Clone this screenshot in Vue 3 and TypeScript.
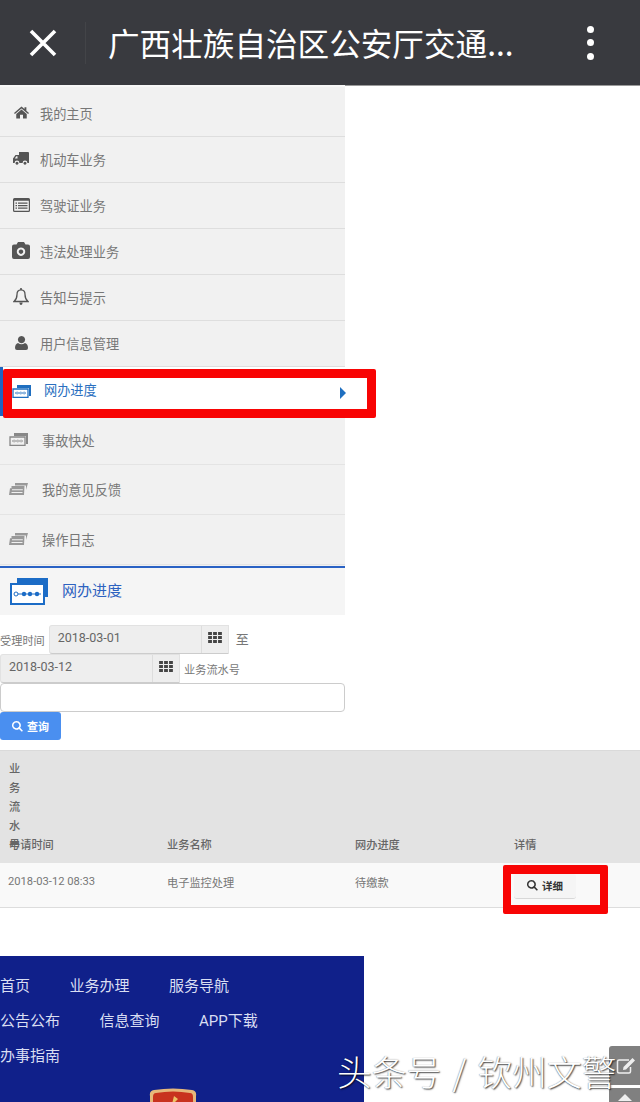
<script setup lang="ts">
interface Part { d: string; kind?: 'fill' | 'line' | 'soft' }
interface Item { label: string; vb: string; cls: string; parts: Part[] }

const card: Part[] = [
  { d: 'M5 0H19V11H17V3H5Z', kind: 'fill' },
  { d: 'M1 4H16V12.5H1Z', kind: 'line' },
  { d: 'M3 8.5H14V7.5H3Z M4.5 6.8h1.4v2.4h-1.4Z M8 6.8h1.4v2.4H8Z M11.5 6.8h1.4v2.4h-1.4Z', kind: 'fill' }
]
const feedback: Part[] = [
  { d: 'M6 1H19L17 8V3.6H6Z', kind: 'soft' },
  { d: 'M2.5 4H15.5L15 13H0L1 6.2H2.5Z M3 7.3H13.8V8.3H3Z M2.5 10H13.5V11H2.5Z', kind: 'soft' }
]

const topItems: Item[] = [
  { label: '我的主页', vb: '0 0 20 16', cls: 'i-home', parts: [{ d: 'M10 0L14 3.4V1H16.5V5.5L20 8.5L18.8 10L10 2.6L1.2 10L0 8.5Z M10 4L17 10V16H12V11H8V16H3V10Z', kind: 'fill' }] },
  { label: '机动车业务', vb: '0 0 16 14', cls: 'i-truck', parts: [{ d: 'M6 0H15Q16 0 16 1V11H14.4A2.4 2.4 0 0 0 9.6 11H6.4A2.4 2.4 0 0 0 1.6 11H0V6.5L2.5 3H6Z M1.8 6.5H4.5V4.3H3.3Z M4 9.7a1.5 1.5 0 1 1-.01 0Z M12 9.7a1.5 1.5 0 1 1-.01 0Z', kind: 'fill' }] },
  { label: '驾驶证业务', vb: '0 0 17 14', cls: 'i-list', parts: [{ d: 'M1.5 0H15.5Q17 0 17 1.5V12.5Q17 14 15.5 14H1.5Q0 14 0 12.5V1.5Q0 0 1.5 0Z M1.2 2.8V12.2Q1.2 12.8 1.8 12.8H15.2Q15.8 12.8 15.8 12.2V2.8Z M2.5 4.5H4V5.7H2.5Z M5 4.5H14.5V5.7H5Z M2.5 7H4V8.2H2.5Z M5 7H14.5V8.2H5Z M2.5 9.5H4V10.7H2.5Z M5 9.5H14.5V10.7H5Z', kind: 'fill' }] },
  { label: '违法处理业务', vb: '0 0 18 17', cls: 'i-camera', parts: [{ d: 'M6 0H12L13.5 2.5H16Q18 2.5 18 4.5V15Q18 17 16 17H2Q0 17 0 15V4.5Q0 2.5 2 2.5H4.5Z M9 5.5a4.2 4.2 0 1 0 .01 0Z M9 7.5a2.2 2.2 0 1 1-.01 0Z', kind: 'fill' }] },
  { label: '告知与提示', vb: '0 0 16 17', cls: 'i-bell', parts: [{ d: 'M8 1.8C5 1.8 4 4 4 6.5C4 10 2.8 12 1 13.5H15C13.2 12 12 10 12 6.5C12 4 11 1.8 8 1.8Z', kind: 'line' }, { d: 'M6.3 14.5H9.7Q9.3 17 8 17Q6.7 17 6.3 14.5Z M7.2 0H8.8V2H7.2Z', kind: 'fill' }] },
  { label: '用户信息管理', vb: '0 0 13 14', cls: 'i-user', parts: [{ d: 'M6.5 0a3.6 3.6 0 1 0 .01 0Z M3 7Q6.5 9.6 10 7Q13 8 13 12Q13 14 11 14H2Q0 14 0 12Q0 8 3 7Z', kind: 'fill' }] }
]
const lowerItems: Item[] = [
  { label: '事故快处', vb: '0 0 19 13', cls: 'i-card', parts: card },
  { label: '我的意见反馈', vb: '0 0 19 13', cls: 'i-feed', parts: feedback },
  { label: '操作日志', vb: '0 0 19 13', cls: 'i-feed', parts: feedback }
]
const footerRows: string[][] = [
  ['首页', '业务办理', '服务导航'],
  ['公告公布', '信息查询', 'APP下载'],
  ['办事指南']
]
const headChars: string[] = ['业', '务', '流', '水']
const searchPath = 'M5 0a5 5 0 1 0 3 9l3.2 3.2 1.2-1.2L9.2 7.8A5 5 0 0 0 5 0Z M5 1.7a3.3 3.3 0 1 1-.01 0Z'
const gridPath = 'M0 0h3.6v2.8H0Z M4.7 0h3.6v2.8H4.7Z M9.4 0H13v2.8H9.4Z M0 3.8h3.6v2.8H0Z M4.7 3.8h3.6v2.8H4.7Z M9.4 3.8H13v2.8H9.4Z M0 7.6h3.6v2.8H0Z M4.7 7.6h3.6v2.8H4.7Z M9.4 7.6H13v2.8H9.4Z'
</script>

<template>
  <div class="page">
    <header class="topbar">
      <svg class="close" viewBox="0 0 28 28"><path d="M2 2L26 26M26 2L2 26" /></svg>
      <span class="divider"></span>
      <h1 class="title">广西壮族自治区公安厅交通...</h1>
      <div class="dots"><i></i><i></i><i></i></div>
    </header>

    <nav class="menu">
      <a v-for="item in topItems" :key="item.label" class="row">
        <span class="icon-slot">
          <svg :class="item.cls" :viewBox="item.vb">
            <path v-for="p in item.parts" :key="p.d" :d="p.d" :class="p.kind" fill-rule="evenodd" />
          </svg>
        </span>
        <span>{{ item.label }}</span>
      </a>
      <a class="row active">
        <span class="icon-slot">
          <svg class="i-card" viewBox="0 0 19 13">
            <path v-for="p in card" :key="p.d" :d="p.d" :class="p.kind" fill-rule="evenodd" />
          </svg>
        </span>
        <span>网办进度</span>
        <i class="caret"></i>
      </a>
      <a v-for="(item, i) in lowerItems" :key="item.label" class="row lower" :class="{ 'lower-first': i === 0 }">
        <span class="icon-slot">
          <svg :class="item.cls" :viewBox="item.vb">
            <path v-for="p in item.parts" :key="p.d" :d="p.d" :class="p.kind" fill-rule="evenodd" />
          </svg>
        </span>
        <span>{{ item.label }}</span>
      </a>
    </nav>

    <div class="section-head">
      <svg class="big-card" viewBox="0 0 38 27">
        <path class="back" d="M7 0H38V19H35V5H7Z" />
        <path class="front" d="M1 6H34V26H1Z" />
        <path class="wire" d="M4 16H31" />
        <circle class="ring" cx="6" cy="16" r="2" />
        <circle class="dot" cx="14" cy="16" r="2.2" />
        <circle class="dot" cx="20" cy="16" r="2.2" />
        <circle class="dot" cx="27" cy="16" r="2.2" />
      </svg>
      <span>网办进度</span>
    </div>

    <form class="filter" @submit.prevent>
      <div class="line">
        <label class="lab">受理时间</label>
        <div class="date wide">
          <span class="date-val">2018-03-01</span>
          <span class="addon"><svg viewBox="0 0 13 10.4"><path :d="gridPath" /></svg></span>
        </div>
        <span class="to">至</span>
      </div>
      <div class="line">
        <div class="date">
          <span class="date-val">2018-03-12</span>
          <span class="addon"><svg viewBox="0 0 13 10.4"><path :d="gridPath" /></svg></span>
        </div>
        <label class="lab serial">业务流水号</label>
      </div>
      <div class="text-input"></div>
      <button class="search" type="button">
        <svg viewBox="0 0 12.5 12.5"><path :d="searchPath" fill-rule="evenodd" /></svg>
        查询
      </button>
    </form>

    <table class="grid">
      <colgroup>
        <col class="c1" /><col class="c2" /><col class="c3" /><col />
      </colgroup>
      <thead>
        <tr>
          <th>
            <span v-for="c in headChars" :key="c" class="stack">{{ c }}</span>
            <span class="apply"><b class="over">号</b>申请时间</span>
          </th>
          <th>业务名称</th>
          <th>网办进度</th>
          <th>详情</th>
        </tr>
      </thead>
      <tbody>
        <tr>
          <td>2018-03-12 08:33</td>
          <td>电子监控处理</td>
          <td>待缴款</td>
          <td class="detail-cell">
            <button class="detail" type="button">
              <svg viewBox="0 0 12.5 12.5"><path :d="searchPath" fill-rule="evenodd" /></svg>
              详细
            </button>
          </td>
        </tr>
      </tbody>
    </table>

    <footer class="foot">
      <div v-for="(r, i) in footerRows" :key="i" class="foot-row">
        <a v-for="t in r" :key="t">{{ t }}</a>
      </div>
      <svg class="emblem" viewBox="0 0 50 40">
        <path class="e-gold" d="M2 8Q1 3 6 2Q25 -1 44 2Q49 3 48 8V40H2Z" />
        <path class="e-red" d="M5 9Q5 5 8 5Q25 2 42 5Q45 5 45 9V40H5Z" />
        <path class="e-fig" d="M26 8L30 11L26 15L32 22H26L22 30L20 20L24 16Z" />
      </svg>
    </footer>

    <div class="mark mark-nav"></div>
    <div class="mark mark-detail"></div>

    <div class="floaters">
      <div class="fl edit">
        <svg viewBox="0 0 20 18"><path d="M13 3H3Q1.5 3 1.5 4.5V14.5Q1.5 16 3 16H13Q14.5 16 14.5 14.5V10" class="fl-line" /><path d="M16.5 1L19 3.5L10 12.5L7 13L7.5 10Z" class="fl-fill" /></svg>
      </div>
      <div class="fl up"><i></i></div>
    </div>
    <div class="watermark">头条号 / 钦州文警</div>
  </div>
</template>

<style scoped>
.page {
  position: relative;
  width: 640px;
  height: 1102px;
  overflow: hidden;
  background: #fff;
  font-family: Roboto, "Noto Sans CJK SC", sans-serif;
  color: #777;
}
.topbar {
  height: 85px;
  background: #393a3f;
  display: flex;
  align-items: center;
  border-bottom: 1px solid #9a9a9a;
  box-sizing: content-box;
}
.close {
  width: 28px;
  height: 28px;
  margin-left: 29px;
  flex: none;
}
.close path {
  stroke: #fff;
  stroke-width: 3.6;
  fill: none;
}
.divider {
  width: 1px;
  height: 42px;
  margin-left: 28px;
  background: #434448;
}
.title {
  margin: 0 0 0 22px;
  font-size: 31.6px;
  font-weight: 400;
  color: #fff;
  line-height: 1;
  white-space: nowrap;
  font-family: "Noto Sans CJK SC", sans-serif;
}
.dots {
  position: absolute;
  left: 586.5px;
  top: 25.5px;
  display: flex;
  flex-direction: column;
  gap: 6.5px;
}
.dots i {
  width: 7px;
  height: 7px;
  border-radius: 50%;
  background: #fff;
}
.menu {
  width: 345px;
  margin-top: -1px;
  background: #f1f1f1;
  padding: 4px 0 1px;
  border-top: 2px solid #f7f7f7;
}
.row {
  height: 46px;
  box-sizing: border-box;
  display: flex;
  align-items: center;
  padding-left: 10px;
  font-size: 13.2px;
  border-bottom: 1px solid #dedede;
  color: #777;
  position: relative;
}
.icon-slot {
  width: 30px;
  flex: none;
  display: flex;
  justify-content: center;
  padding-right: 8px;
  box-sizing: border-box;
  margin-top: -2px;
}
.row svg { display: block; color: #555; }
.fill { fill: currentColor; }
.line { fill: none; stroke: currentColor; stroke-width: 1.3; }
.soft { fill: #999; }
.i-home { width: 15px; height: 13px; }
.i-truck { width: 16px; height: 14px; }
.i-list { width: 17px; height: 14px; }
.i-camera { width: 18px; height: 17px; }
.i-bell { width: 16px; height: 17px; }
.i-user { width: 13px; height: 14px; }
.i-card { width: 19px; height: 13px; }
.i-feed { width: 19px; height: 13px; }
.active {
  height: 49px;
  padding-left: 14px;
  padding-bottom: 5px;
  background: #fff;
  color: #2a6fbf;
  border-left: 3px solid #1f63c0;
  border-bottom: 0;
}
.active .icon-slot {
  width: 27px;
  padding-right: 0;
  margin: 5px 9px 0 -9px;
}
.active svg { color: #1f6fc0; }
.caret {
  position: absolute;
  left: 337px;
  top: 20px;
  border-left: 6px solid #1f6fc0;
  border-top: 6px solid transparent;
  border-bottom: 6px solid transparent;
}
.lower {
  height: 50px;
  padding-left: 9px;
  color: #777;
  border-bottom-color: #e4e4e4;
}
.lower .icon-slot { width: 33px; padding-right: 14px; }
.lower svg { color: #888; }
.lower-first { height: 49px; }
.section-head {
  width: 345px;
  height: 49px;
  box-sizing: border-box;
  border-top: 2px solid #2a62c4;
  background: #f5f5f5;
  display: flex;
  align-items: center;
  padding: 0 0 4px 10px;
  gap: 14px;
  font-size: 15px;
  color: #2d62c0;
}
.big-card { width: 38px; height: 27px; margin-top: 4px; }
.back { fill: #1c6cc6; }
.front { fill: #fff; stroke: #1c6cc6; stroke-width: 2; }
.wire { stroke: #1c6cc6; stroke-width: 1; }
.dot { fill: #1c6cc6; }
.ring { fill: #fff; stroke: #1c6cc6; stroke-width: 1; }
.filter {
  width: 345px;
  padding-top: 10px;
}
.filter .line {
  display: flex;
  align-items: center;
  fill: initial;
  stroke: initial;
  stroke-width: initial;
  height: 29px;
}
.lab {
  font-size: 11.2px;
  color: #777;
  white-space: nowrap;
}
.date {
  width: 180px;
  height: 29px;
  box-sizing: border-box;
  display: flex;
  background: #eee;
  border: 1px solid #e2e2e2;
  border-bottom-color: #ccc;
  border-radius: 3px 0 0 3px;
  font-size: 12.5px;
  color: #666;
}
.date.wide { margin-left: 4px; }
.date-val {
  flex: 1;
  padding-left: 8px;
  line-height: 23px;
}
.addon {
  width: 27px;
  flex: none;
  border-left: 1px solid #ddd;
  display: flex;
  justify-content: center;
  padding-top: 6px;
  box-sizing: border-box;
}
.addon svg { width: 14px; height: 11px; fill: #444; }
.to { margin: 0 0 2px 7px; font-size: 13px; color: #777; }
.serial { margin-left: 4px; }
.text-input {
  width: 345px;
  height: 29px;
  box-sizing: border-box;
  border: 1px solid #ccc;
  border-radius: 4px;
  background: #fff;
}
.search {
  display: flex;
  align-items: center;
  gap: 4px;
  width: 61px;
  height: 28px;
  margin: 0;
  padding: 0 0 0 12px;
  border: 0;
  border-radius: 3px;
  background: #4a8ff0;
  color: #fff;
  font: bold 11px "Noto Sans CJK SC", sans-serif;
}
.search svg { width: 11px; height: 11px; fill: #fff; }
.grid {
  width: 640px;
  table-layout: fixed;
  border-collapse: collapse;
  margin-top: 10px;
  font-size: 11.2px;
}
.c1 { width: 157px; }
.c2 { width: 190px; }
.c3 { width: 159px; }
th {
  background: #e3e3e3;
  color: #666;
  font-weight: 500;
  text-align: left;
  vertical-align: bottom;
  padding: 8px 9px 7px;
  line-height: 19.1px;
  height: 112px;
  box-sizing: border-box;
  border-top: 1px solid #dadada;
}
th + th { padding-left: 10px; padding-right: 8px; }
th:nth-child(3) { padding-left: 8px; }
th:nth-child(4) { padding-left: 8px; }
.stack { display: block; }
.apply { display: block; position: relative; }
.over { position: absolute; left: 0; top: 0; font-weight: 500; }
td {
  height: 45px;
  box-sizing: border-box;
  padding: 0 0 6px 10px;
  background: #f9f9f9;
  border-bottom: 1px solid #ddd;
  color: #777;
}
td:first-child { padding-left: 8px; }
td:nth-child(3) { padding-left: 8px; }
.detail-cell { padding: 3px 0 0 8px; }
.detail {
  display: flex;
  align-items: center;
  justify-content: center;
  gap: 4px;
  width: 62px;
  height: 25px;
  margin: 0;
  padding: 0;
  background: #f5f5f5;
  border: 0;
  border-bottom: 1px solid #d8d8d8;
  border-radius: 3px;
  color: #333;
  font: bold 10.5px "Noto Sans CJK SC", sans-serif;
}
.detail svg { width: 11px; height: 11px; fill: #333; }
.foot {
  width: 364px;
  height: 200px;
  margin-top: 48px;
  padding-top: 11px;
  box-sizing: border-box;
  background: #10208a;
}
.foot-row {
  height: 35px;
  display: flex;
  gap: 39.5px;
  align-items: center;
  font-size: 15px;
  color: #d9def2;
}
.emblem {
  display: block;
  width: 50px;
  height: 40px;
  margin: 16px 0 0 148px;
}
.e-gold { fill: #e6b77a; }
.e-red { fill: #c8321e; }
.e-fig { fill: #edc263; }
.mark {
  position: absolute;
  box-sizing: border-box;
  border-style: solid;
  border-color: #f80404;
  border-radius: 2px;
}
.mark-nav {
  left: 3px;
  top: 369px;
  width: 373px;
  height: 49px;
  border-width: 9px;
}
.mark-detail {
  left: 503px;
  top: 865px;
  width: 105px;
  height: 49px;
  border-width: 9px 8px;
}
.floaters {
  position: absolute;
  left: 609px;
  top: 1046px;
  width: 31px;
}
.fl {
  background: #808080;
  border-radius: 3px 0 0 3px;
  display: flex;
  justify-content: center;
  align-items: center;
}
.edit { height: 39px; }
.edit svg { width: 20px; height: 18px; margin-left: 3px; }
.fl-line { fill: none; stroke: #eee; stroke-width: 1.5; }
.fl-fill { fill: #eee; }
.up { height: 30px; margin-top: 3px; align-items: flex-start; padding-top: 6px; box-sizing: border-box; }
.up i {
  border-left: 7px solid transparent;
  border-right: 7px solid transparent;
  border-bottom: 7px solid #eee;
}
.watermark {
  position: absolute;
  left: 337px;
  top: 1046px;
  font-size: 34.8px;
  line-height: 50px;
  font-weight: 300;
  word-spacing: 3.5px;
  color: #fff;
  white-space: nowrap;
  font-family: "Noto Sans CJK SC", sans-serif;
  text-shadow: 1px 1px 1.5px rgba(0, 0, 0, 0.75), -0.5px -0.5px 1px rgba(0, 0, 0, 0.35);
}
</style>

<style>
html, body { margin: 0; overflow: hidden; background: #fff; }
</style>
